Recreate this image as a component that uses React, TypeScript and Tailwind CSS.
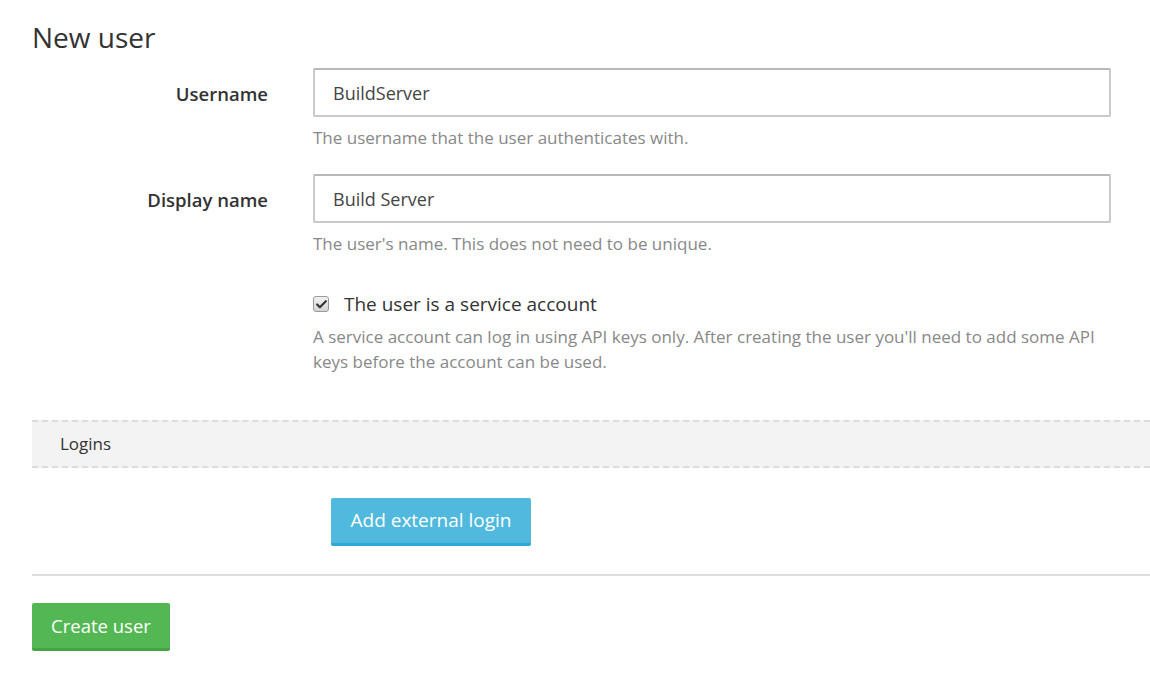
import { Check } from "lucide-react";

function Field({ label, value, help }: { label: string; value: string; help: string }) {
  return (
    <div className="flex">
      <label className="w-[236px] shrink-0 pt-[12px] text-right text-[18.5px] font-semibold text-[#333]">
        {label}
      </label>
      <div className="ml-[45px] w-[798px]">
        <input
          readOnly
          value={value}
          className="h-[49px] w-full rounded-[2px] border-2 border-[#cacaca] border-t-[#b8b8b8] px-[18px] text-[18px] text-[#444] outline-none"
        />
        <p className="mt-[8px] text-[17px] leading-[25px] text-[#888]">{help}</p>
      </div>
    </div>
  );
}

export default function App() {
  return (
    <div className="min-h-[685px] bg-white pl-8 pt-[20px] font-['Segoe_UI','Open_Sans',sans-serif] text-[#333]">
      <h1 className="text-[28px] font-normal leading-[34px] text-[#333]">New user</h1>

      <div className="mt-[14px] flex flex-col gap-[24px]">
        <Field label="Username" value="BuildServer" help="The username that the user authenticates with." />
        <Field label="Display name" value="Build Server" help="The user's name. This does not need to be unique." />
      </div>

      <div className="ml-[281px] mt-[35px] w-[798px]">
        <label className="flex items-center gap-[15px]">
          <span className="flex h-[16px] w-[16px] items-center justify-center rounded-[3px] border border-[#9a9a9a] bg-gradient-to-b from-[#f2f2f2] to-[#d4d4d4]">
            <Check size={13} strokeWidth={4} className="text-[#333]" />
          </span>
          <span className="text-[19px] leading-[26px] text-[#333]">The user is a service account</span>
        </label>
        <p className="mt-[7px] text-[17px] leading-[25px] text-[#888]">
          A service account can log in using API keys only. After creating the user you'll need to add some API keys
          before the account can be used.
        </p>
      </div>

      <div className="mt-[46px] flex h-[48px] items-center border-y-2 border-dashed border-[#dcdcdc] bg-[#f3f3f3] pl-[28px]">
        <span className="text-[17px] text-[#333]">Logins</span>
      </div>

      <div className="ml-[299px] mt-[30px]">
        <button className="h-[48px] w-[200px] rounded-[2px] border-b-[3px] border-[#2ea9d5] bg-[#50b9dd] text-[19px] text-white">
          Add external login
        </button>
      </div>

      <hr className="mt-[28px] border-t-2 border-[#dddddd]" />

      <button className="mt-[27px] h-[48px] w-[138px] rounded-[2px] border-b-[3px] border-[#45a345] bg-[#53b853] text-[18.5px] text-white">
        Create user
      </button>
    </div>
  );
}
